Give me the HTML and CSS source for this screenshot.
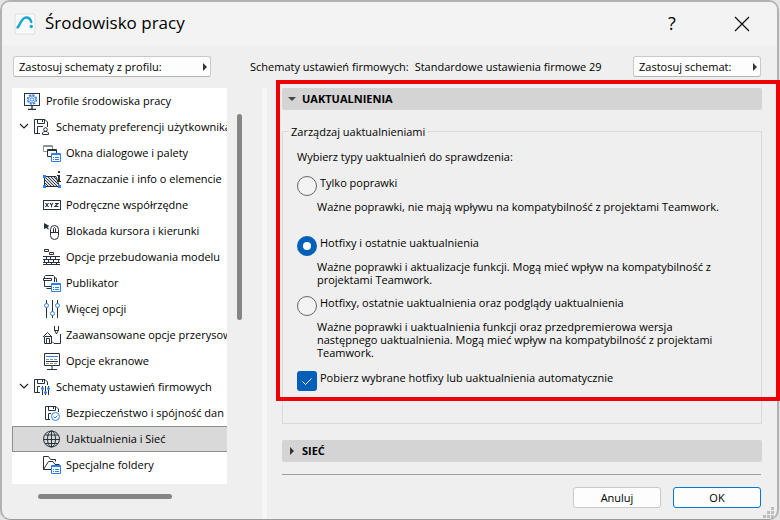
FILE: index.html
```html
<!DOCTYPE html>
<html lang="pl">
<head>
    <meta charset="UTF-8">
    <meta name="viewport" content="width=device-width, initial-scale=1">
    <title>Środowisko pracy</title>
    <link rel="stylesheet" href="styles.css">
</head>
<body>
    <div class="dialog">
        <header class="titlebar">
            <svg class="app-icon" viewBox="0 0 22 22">
                <rect x="1" y="1" width="20" height="20" rx="2" fill="#fafafa" stroke="#dedede"/>
                <path d="M3.500 14.500C6 12.500 7.500 4.500 12 4.500C15 4.500 16.500 6 17.300 9" fill="none" stroke="#16a6cf" stroke-width="2.400" stroke-linecap="round"/>
                <circle cx="17.300" cy="13.500" r="1.700" fill="#16a6cf"/>
            </svg>
            <h1>Środowisko pracy</h1>
            <button class="title-btn help" type="button" aria-label="Pomoc">?</button>
            <button class="title-btn" type="button" aria-label="Zamknij">
                <svg class="close-icon" viewBox="0 0 16 16"><path d="M1 1L15 15M15 1L1 15" fill="none" stroke="#111" stroke-width="1.300"/></svg>
            </button>
        </header>

        <div class="toolbar">
            <button class="popup-btn profile-btn" type="button">Zastosuj schematy z profilu:<span class="arrow-right"></span></button>
            <div class="scheme">
                <span>Schematy ustawień firmowych:</span>
                <span>Standardowe ustawienia firmowe 29</span>
            </div>
            <button class="popup-btn scheme-btn" type="button">Zastosuj schemat:<span class="arrow-right"></span></button>
        </div>

        <div class="content">
            <nav class="sidebar">
                <ul class="tree">
                    <li><a class="row level-0" href="#profile">
                        <svg class="icon" viewBox="0 0 18 18">
                            <rect x="1.500" y="1.500" width="15" height="12" fill="none" stroke="#26323a"/>
                            <path d="M9 14V17M5 17.500H13" fill="none" stroke="#26323a" stroke-width="1.400"/>
                            <circle cx="9" cy="7.500" r="4.500" fill="none" stroke="#2f7ff0" stroke-width="1.500" stroke-dasharray="2.300 1.200"/>
                            <circle cx="9" cy="7.500" r="3.500" fill="none" stroke="#2f7ff0" stroke-width="0.800"/>
                            <circle cx="9" cy="7.500" r="1.700" fill="#fff" stroke="#2f7ff0"/>
                        </svg>
                        Profile środowiska pracy</a></li>
                    <li><a class="row level-1" href="#preferencje">
                        <svg class="chevron" viewBox="0 0 10 6"><path d="M1 1L5 5L9 1" fill="none" stroke="#222" stroke-width="1.200"/></svg>
                        <svg class="icon" viewBox="0 0 18 18">
                            <path d="M7 15.500H1.500V1.500H12L14.500 4V9M4.500 1.500V5.500H11.500V1.500M9.500 2V4M4.500 15V8.500H10" fill="none" stroke="#26323a"/>
                            <circle cx="12.500" cy="11.500" r="1.800" fill="#fff" stroke="#26323a"/>
                            <path d="M9.500 16.500V15L11 13.500H14L15.500 15V16.500Z" fill="#fff" stroke="#26323a"/>
                        </svg>
                        Schematy preferencji użytkownika</a></li>
                    <li><a class="row level-2" href="#okna">
                        <svg class="icon" viewBox="0 0 18 18">
                            <path d="M4 7.500H0.500V1.500H9.500V5M0.500 2.500H9.500" fill="none" stroke="#8d9297"/>
                            <path d="M8 12.500H4.500V5.500H13.500V9M4.500 6.500H13.500" fill="none" stroke="#26323a"/>
                            <path d="M8.500 9.500H17.500V17.500H8.500ZM8.500 10.500H17.500M10 13.500H11M12 13.500H16M10 15.500H11M12 15.500H16" fill="#fff" stroke="#2f7ff0"/>
                        </svg>
                        Okna dialogowe i palety</a></li>
                    <li><a class="row level-2" href="#zaznaczanie">
                        <svg class="icon" viewBox="0 0 18 18">
                            <path d="M1.500 6.500H13L16.500 16.500H1.500Z" fill="#d9dbdc" stroke="#26323a"/>
                            <path d="M2 13L5.500 16.500M2 10L8.500 16.500M2 7L11.500 16.500M5 7L14.500 16.500M8 7L15 14M11 7L14 10" fill="none" stroke="#26323a" stroke-width="0.900"/>
                            <path d="M0 5H3V8H0ZM0 15H3V18H0ZM15 15H18V18H15Z" fill="#2f7ff0"/>
                            <path d="M15 1H17V3H15ZM14 5H17V11H18V12H14V11H15V6H14Z" fill="#26323a"/>
                        </svg>
                        Zaznaczanie i info o elemencie</a></li>
                    <li><a class="row level-2" href="#wspolrzedne">
                        <svg class="icon" viewBox="0 0 18 18">
                            <rect x="0.500" y="4.500" width="17" height="9" fill="none" stroke="#26323a"/>
                            <path d="M2.500 7L5.500 11M5.500 7L2.500 11M7 7L8.500 9L10 7M8.500 9V11.300M12 7.500H15L12 10.500H15.500" fill="none" stroke="#26323a" stroke-width="1.100"/>
                        </svg>
                        Podręczne współrzędne</a></li>
                    <li><a class="row level-2" href="#blokada">
                        <svg class="icon" viewBox="0 0 18 18">
                            <path d="M1 1L6.500 4L4.500 5L6 7L5 7.500L3.500 6L1 7Z" fill="#26323a"/>
                            <rect x="7.500" y="3.500" width="8" height="14" rx="4" fill="none" stroke="#26323a"/>
                            <path d="M8 10.500H15M10.500 10V6.500L11.500 5.500L12.500 6.500V10" fill="none" stroke="#26323a"/>
                        </svg>
                        Blokada kursora i kierunki</a></li>
                    <li><a class="row level-2" href="#przebudowa">
                        <svg class="icon" viewBox="0 0 18 18">
                            <path d="M1.500 1.500H5.500V3.500H1.500ZM6.500 4.500H10.500V6.500H6.500ZM0 8.500H17M0 11.500H17M0 14.500H17M0 16.500H17M3.500 8.500V11.500M7.500 8.500V11.500M12.500 8.500V11.500M1.500 11.500V14.500M5.500 11.500V14.500M10.500 11.500V14.500M15.500 11.500V14.500M3.500 14.500V16.500M8.500 14.500V16.500M13.500 14.500V16.500" fill="none" stroke="#26323a"/>
                        </svg>
                        Opcje przebudowania modelu</a></li>
                    <li><a class="row level-2" href="#publikator">
                        <svg class="icon" viewBox="0 0 18 18">
                            <path d="M1.500 4V2.500L2.500 1.500H10.500L11.500 2.500V8M0.500 4.500H8.500V6.500H0.500ZM1.500 7V12.500H8M3.500 14.500H8M11.500 3.500L13.500 4.500V8" fill="none" stroke="#26323a"/>
                            <path d="M8.500 9.500H17.500V17.500H8.500ZM8.500 10.500H17.500M10 13.500H11M12 13.500H16M10 15.500H11M12 15.500H16" fill="#fff" stroke="#2f7ff0"/>
                        </svg>
                        Publikator</a></li>
                    <li><a class="row level-2" href="#wiecej">
                        <svg class="icon" viewBox="0 0 18 18">
                            <path d="M3.500 0V18M9.500 0V18M14.500 0V18" fill="none" stroke="#26323a"/>
                            <circle cx="3.500" cy="5.500" r="2" fill="#fff" stroke="#2f7ff0"/>
                            <circle cx="9.500" cy="13.500" r="2" fill="#fff" stroke="#2f7ff0"/>
                            <circle cx="14.500" cy="5.500" r="2" fill="#fff" stroke="#2f7ff0"/>
                        </svg>
                        Więcej opcji</a></li>
                    <li><a class="row level-2" href="#przerysowanie">
                        <svg class="icon" viewBox="0 0 18 18">
                            <path d="M0 11L4.500 6.500L9 11M1.500 10.500V17.500H8.500V10.500M3.500 17V12.500H6.500V17M2 10.500H8M11.500 0V4L13.500 8L15.500 4V0M11.500 4.500H15.500M17.500 8V17.500H11L9 15.500" fill="none" stroke="#26323a"/>
                        </svg>
                        Zaawansowane opcje przerysow</a></li>
                    <li><a class="row level-2" href="#ekran">
                        <svg class="icon" viewBox="0 0 18 18">
                            <path d="M1.500 1.500H16.500V13.500H1.500ZM9 14V17M4 17.500H14M3 9.500H15" fill="none" stroke="#26323a"/>
                            <path d="M3 4.500H15" stroke="#2f7ff0"/>
                            <path d="M3 7.500H15M3 11.500H15" stroke="#8d9297" stroke-dasharray="3 1"/>
                        </svg>
                        Opcje ekranowe</a></li>
                    <li><a class="row level-1" href="#firmowe">
                        <svg class="chevron" viewBox="0 0 10 6"><path d="M1 1L5 5L9 1" fill="none" stroke="#222" stroke-width="1.200"/></svg>
                        <svg class="icon" viewBox="0 0 18 18">
                            <path d="M7 14.500H1.500V1.500H12L14.500 4V7M4.500 1.500V5.500H11.500V1.500M9.500 2V4M4.500 14V8.500H7M9.500 8V17M12.500 8V17M15.500 8V17" fill="none" stroke="#26323a"/>
                            <circle cx="9.500" cy="10.500" r="1.500" fill="#2f7ff0"/>
                            <circle cx="12.500" cy="14.500" r="1.500" fill="#2f7ff0"/>
                            <circle cx="15.500" cy="10.500" r="1.500" fill="#2f7ff0"/>
                        </svg>
                        Schematy ustawień firmowych</a></li>
                    <li><a class="row level-2" href="#bezpieczenstwo">
                        <svg class="icon" viewBox="0 0 18 18">
                            <path d="M7 15.500H2.500V2.500H13L15.500 5V8M5.500 2.500V6.500H12.500V2.500M10.500 3V5M5.500 15V9.500H8" fill="none" stroke="#26323a"/>
                            <circle cx="12.500" cy="12.500" r="4" fill="#fff" stroke="#2f7ff0"/>
                            <path d="M10.500 12.500L12 14L14.500 11.500" fill="none" stroke="#2f7ff0"/>
                        </svg>
                        Bezpieczeństwo i spójność dan</a></li>
                    <li><a class="row level-2 selected" href="#uaktualnienia" aria-current="page">
                        <svg class="icon" viewBox="0 0 18 18">
                            <circle cx="8.500" cy="9" r="8" fill="none" stroke="#26323a"/>
                            <ellipse cx="8.500" cy="9" rx="4" ry="8" fill="none" stroke="#26323a"/>
                            <path d="M8.500 1V17M0.500 9.500H16.500M2 5H15M2 13.500H15" fill="none" stroke="#26323a"/>
                        </svg>
                        Uaktualnienia i Sieć</a></li>
                    <li><a class="row level-2" href="#foldery">
                        <svg class="icon" viewBox="0 0 18 18">
                            <path d="M8 13.500H0.500V0.500H5.500L7.500 3.500H12.500V5.500M0.500 13.500L5.500 5.500H10L12 8.500H16.500" fill="none" stroke="#26323a"/>
                            <path d="M8.500 9.500H17.500V17.500H8.500ZM8.500 10.500H17.500M10 13.500H11M12 13.500H16M10 15.500H11M12 15.500H16" fill="#fff" stroke="#2f7ff0"/>
                        </svg>
                        Specjalne foldery</a></li>
                </ul>
                <div class="scroll-y"></div>
                <div class="scroll-x"></div>
            </nav>

            <div class="splitter"></div>

            <main class="pane">
                <section class="section">
                    <h2><button class="section-head" type="button" aria-expanded="true"><span class="arrow-down"></span>UAKTUALNIENIA</button></h2>
                    <fieldset class="group">
                        <legend>Zarządzaj uaktualnieniami</legend>
                        <p class="intro">Wybierz typy uaktualnień do sprawdzenia:</p>
                        <div class="option">
                            <div class="choice">
                                <input type="radio" name="typ" id="typ-poprawki">
                                <label for="typ-poprawki">Tylko poprawki</label>
                            </div>
                            <p class="hint">Ważne poprawki, nie mają wpływu na kompatybilność z projektami Teamwork.</p>
                        </div>
                        <div class="option">
                            <div class="choice">
                                <input type="radio" name="typ" id="typ-hotfixy" checked>
                                <label for="typ-hotfixy">Hotfixy i ostatnie uaktualnienia</label>
                            </div>
                            <p class="hint">Ważne poprawki i aktualizacje funkcji. Mogą mieć wpływ na kompatybilność z projektami Teamwork.</p>
                        </div>
                        <div class="option">
                            <div class="choice">
                                <input type="radio" name="typ" id="typ-podglady">
                                <label for="typ-podglady">Hotfixy, ostatnie uaktualnienia oraz podglądy uaktualnienia</label>
                            </div>
                            <p class="hint">Ważne poprawki i uaktualnienia funkcji oraz przedpremierowa wersja następnego uaktualnienia. Mogą mieć wpływ na kompatybilność z projektami Teamwork.</p>
                        </div>
                        <div class="choice auto">
                            <input type="checkbox" id="auto" checked>
                            <label for="auto">Pobierz wybrane hotfixy lub uaktualnienia automatycznie</label>
                            <svg class="tick" viewBox="0 0 20 20"><path d="M5.500 10.500L8.500 13.500L14.500 7.500" fill="none" stroke="#fff"/></svg>
                        </div>
                    </fieldset>
                    <div class="highlight"></div>
                </section>

                <h2><button class="section-head" type="button" aria-expanded="false"><span class="arrow-right"></span>SIEĆ</button></h2>

                <footer class="actions">
                    <button class="btn" type="button">Anuluj</button>
                    <button class="btn primary" type="button">OK</button>
                </footer>
            </main>
        </div>

        <svg class="grip" viewBox="0 0 11 11">
            <path d="M8 0H11V3H8ZM4 4H7V7H4ZM8 4H11V7H8ZM0 8H3V11H0ZM4 8H7V11H4ZM8 8H11V11H8Z" fill="#bdbdbd"/>
        </svg>
    </div>
</body>
</html>
```
FILE: styles.css
```css
* {
    box-sizing: border-box;
}
body {
    margin: 0;
    background-color: #e4e4e4;
    color: #000;
    font-family: "Open Sans", "Noto Sans", sans-serif;
    font-size: 11px;
    line-height: 13px;
}
h1, h2, p, ul {
    margin: 0;
    padding: 0;
}
button {
    font: inherit;
    color: inherit;
    cursor: pointer;
}
.dialog {
    position: relative;
    display: flex;
    flex-direction: column;
    min-height: 100vh;
    margin-right: 1px;
    border: 2px solid #b2b2b2;
    border-bottom: 1px solid #9a9a9a;
    border-radius: 10px;
    background-color: #efefef;
}

/* title bar */
.titlebar {
    display: flex;
    align-items: center;
    height: 43px;
    padding: 0 20px 0 12px;
    border-radius: 8px 8px 0 0;
    background-color: #f3f3f3;
}
.app-icon {
    width: 22px;
    height: 22px;
}
.titlebar h1 {
    flex: 1;
    margin-left: 9px;
    font-size: 17px;
    line-height: 22px;
    font-weight: normal;
    padding-bottom: 2px;
}
.title-btn {
    display: flex;
    align-items: center;
    justify-content: center;
    width: 30px;
    height: 30px;
    margin-left: 40px;
    padding: 0;
    border: none;
    background: none;
}
.help {
    font-size: 18px;
}
.close-icon {
    width: 16px;
    height: 16px;
}

/* toolbar */
.toolbar {
    display: flex;
    align-items: center;
    height: 43px;
    padding: 0 16px 0 11px;
}
.popup-btn {
    display: flex;
    align-items: center;
    justify-content: space-between;
    height: 21px;
    padding: 0 3px 0 5px;
    border: 1px solid #c9c9c9;
    border-bottom-color: #b5b5b5;
    border-radius: 3px;
    background-color: #fdfdfd;
    white-space: nowrap;
}
.profile-btn {
    width: 198px;
}
.scheme {
    display: flex;
    flex: 1;
    gap: 6px;
    margin-left: 39px;
    white-space: nowrap;
}
.scheme-btn {
    width: 128px;
}
.arrow-right {
    border-left: 4px solid #333;
    border-top: 4px solid transparent;
    border-bottom: 4px solid transparent;
}
.arrow-down {
    border-top: 4px solid #444;
    border-left: 4px solid transparent;
    border-right: 4px solid transparent;
}

/* scheme tree */
.content {
    display: flex;
    flex: 1;
}
.sidebar {
    display: grid;
    grid-template-columns: 215px 5px;
    grid-template-rows: auto 5px;
    gap: 10px;
    align-content: start;
    width: 250px;
    padding-left: 10px;
}
.tree {
    padding-bottom: 6px;
    background-color: #fff;
    list-style: none;
    overflow: hidden;
}
.row {
    display: flex;
    align-items: center;
    height: 26px;
    padding-bottom: 2px;
    border: 1px solid transparent;
    color: inherit;
    text-decoration: none;
    white-space: nowrap;
}
.level-0 {
    padding-left: 10px;
}
.level-1 {
    padding-left: 6px;
}
.level-2 {
    padding-left: 30px;
}
.selected {
    border-color: #8f8f8f;
    border-right: none;
    background-color: #d9d9d9;
}
.icon {
    flex: none;
    align-self: flex-start;
    width: 18px;
    height: 18px;
    margin: 3px 5px 0 0;
}
.chevron {
    flex: none;
    width: 10px;
    height: 6px;
    margin-right: 4px;
}
.scroll-y {
    height: 206px;
    margin-top: 26px;
    border-radius: 3px;
    background-color: #858585;
}
.scroll-x {
    width: 134px;
    margin-left: 26px;
    border-radius: 3px;
    background-color: #858585;
}
.splitter {
    width: 5px;
    margin-left: 10px;
    background-color: #f6f6f6;
}

/* settings pane */
.pane {
    flex: 1;
    padding: 0 15px 11px;
}
.section {
    position: relative;
    margin-bottom: 16px;
}
.section-head {
    display: flex;
    align-items: center;
    width: 100%;
    height: 22px;
    padding: 0 6px 1px;
    border: none;
    border-radius: 2px;
    background-color: #d4d4d4;
    font-size: 11px;
    font-weight: bold;
}
.section-head span {
    margin-right: 6px;
}
.section-head .arrow-right {
    margin: 0 8px 0 2px;
}
.group {
    margin: 15px 0 0;
    padding: 12px 14px 32px;
    border: 1px solid #dadada;
}
.group legend {
    margin-left: -8px;
    padding: 0 2px;
}
.intro {
    margin-bottom: 13px;
}
.option {
    min-height: 60px;
    padding-bottom: 9px;
}
.choice {
    position: relative;
    display: flex;
    height: 20px;
    gap: 3px;
}
.choice input {
    flex: none;
    width: 20px;
    height: 20px;
    margin: 0;
    appearance: none;
    border: 1px solid #666;
    border-radius: 50%;
    background-color: #f3f3f3;
}
.choice input:checked {
    border: 6px solid #005fb8;
    background-color: #fff;
}
.choice input[type="checkbox"] {
    border-radius: 3px;
}
.choice input[type="checkbox"]:checked {
    background-color: #005fb8;
}
.hint {
    max-width: 410px;
    margin: 4px 0 0 20px;
}
.auto {
    margin-top: 3px;
}
.tick {
    position: absolute;
    left: 0;
    top: 0;
    width: 20px;
    height: 20px;
    pointer-events: none;
}
/* red frame drawn over the section */
.highlight {
    position: absolute;
    top: -8px;
    right: -18px;
    bottom: 23px;
    left: -6px;
    border: 4px solid #ec0404;
    pointer-events: none;
}
.actions {
    display: flex;
    justify-content: flex-end;
    gap: 12px;
    margin: 12px 1px 0 0;
    padding-top: 12px;
    border-top: 1px solid #a0a0a0;
}
.btn {
    width: 88px;
    height: 21px;
    padding: 0;
    border: 1px solid #c9c9c9;
    border-radius: 3px;
    background-color: #fdfdfd;
}
.primary {
    border-color: #0078d4;
}
.grip {
    position: absolute;
    right: 3px;
    bottom: 1px;
    width: 11px;
    height: 11px;
}
```
